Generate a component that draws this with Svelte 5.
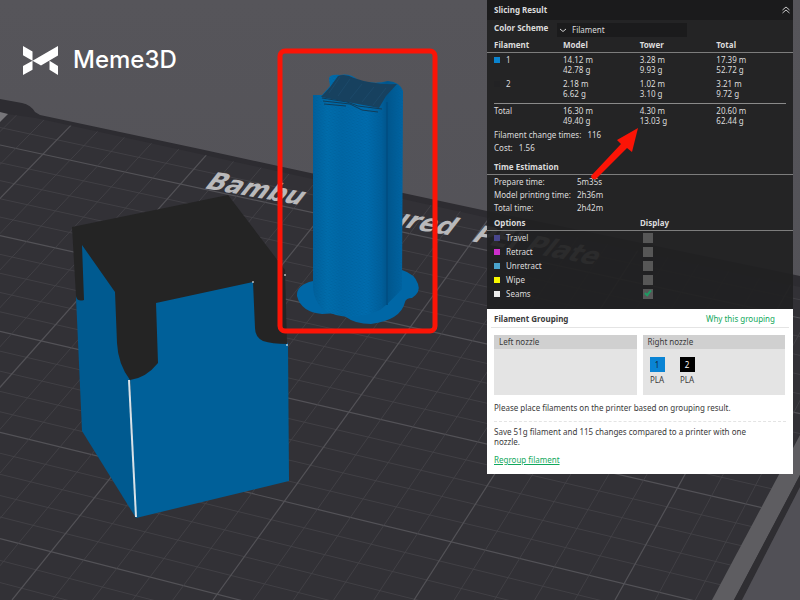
<script lang="ts">
  const filaments = [
    { id: 1, color: '#0a84cf', model: ['14.12 m', '42.78 g'], tower: ['3.28 m', '9.93 g'], total: ['17.39 m', '52.72 g'] },
    { id: 2, color: '#222224', model: ['2.18 m', '6.62 g'], tower: ['1.02 m', '3.10 g'], total: ['3.21 m', '9.72 g'] },
  ]
  const sums = [
    ['16.30 m', '49.40 g'],
    ['4.30 m', '13.03 g'],
    ['20.60 m', '62.44 g'],
  ]
  const times = [
    ['Prepare time:', '5m35s'],
    ['Model printing time:', '2h36m'],
    ['Total time:', '2h42m'],
  ]

  let scheme = $state('Filament')
  let options = $state([
    { name: 'Travel', color: '#48468c', shown: false },
    { name: 'Retract', color: '#cc2ecc', shown: false },
    { name: 'Unretract', color: '#4aa3cc', shown: false },
    { name: 'Wipe', color: '#f8f800', shown: false },
    { name: 'Seams', color: '#ececec', shown: true },
  ])

  // Build plate grid in perspective, every fifth line is a major one.
  const across = Array.from({ length: 30 }, (_, i) => {
    const m = (i - 1) / 5
    return { y1: 145 + 88 * m + 2.6 * m * m, y2: 318 + 92 * m + 3.6 * m * m, major: (i - 1) % 5 === 0 }
  })
  const along = Array.from({ length: 42 }, (_, i) => {
    const k = (i - 10) / 5
    // x at y=80 and y=600
    return { x1: 115 + 158 * k, x2: -390 + 201 * k, major: i % 5 === 0 }
  })
</script>

<main>
  <svg class="scene" viewBox="0 0 800 600" preserveAspectRatio="xMinYMin slice" aria-hidden="true">
    <defs>
      <clipPath id="plate">
        <path d="M0 113L36 118L200 154L403 199L487 217L793 285L800 287V436L712 600H0Z" />
      </clipPath>
      <linearGradient id="back" x1="0" y1="0" x2="0" y2="1">
        <stop offset="0" stop-color="#56555a" />
        <stop offset="1" stop-color="#504f55" />
      </linearGradient>
      <linearGradient id="tower" x1="0" y1="0" x2="1" y2="0">
        <stop offset="0" stop-color="#00609c" />
        <stop offset="0.16" stop-color="#006dac" />
        <stop offset="0.32" stop-color="#0067a6" />
        <stop offset="0.6" stop-color="#006cae" />
        <stop offset="0.76" stop-color="#005f9c" />
        <stop offset="0.82" stop-color="#00558c" />
        <stop offset="1" stop-color="#0064a3" />
      </linearGradient>
      <pattern id="layers" width="4" height="3" patternUnits="userSpaceOnUse" patternTransform="rotate(12)">
        <path d="M0 1H2M2 2.5H4" stroke="#00578d" stroke-width="0.6" opacity="0.55" />
      </pattern>
    </defs>

    <rect width="800" height="600" fill="url(#back)" />
    <path d="M0 99L22 103Q31 105 35 112L40 115L200 149L403 193L487 211L800 276V600H0Z" fill="#2d2c31" />
    <path d="M0 113L36 118L200 154L403 199L800 287V600H0Z" fill="#323136" />

    <g clip-path="url(#plate)">
      {#each across as line}
        <line class="grid" class:major={line.major} x1="0" y1={line.y1} x2="800" y2={line.y2} />
      {/each}
      {#each along as line}
        <line class="grid" class:major={line.major} x1={line.x1} y1="80" x2={line.x2} y2="600" />
      {/each}
    </g>
    <path d="M0 112L8 114L0 122Z" fill="#77767a" />
    <path d="M800 435L712 600H734L800 475Z" fill="#5e5d61" />
    <path d="M800 475L734 600H742L800 487Z" fill="#2f2e32" />
    <path d="M800 487L742 600H800Z" fill="#515056" />

    <g class="plate-name">
      <text transform="translate(203 188) rotate(10) skewX(-28)">Bambu</text>
      <text transform="translate(328 214) rotate(10) skewX(-28)">Textured</text>
      <text transform="translate(470 241) rotate(11) skewX(-28)">PEI Plate</text>
    </g>

    <!-- prime tower -->
    <path
      d="M313 281Q296 285 297 296Q301 312 322 314Q338 312 346 317Q355 324 371 324Q401 320 405 302Q406 298 412 298Q421 292 418 284Q415 274 402 270Z"
      fill="#0067a6"
    />
    <path
      d="M313 95L322 95L330 86L329 79Q329 74 340 75Q350 73 358 80Q374 85 388 81Q400 82 403 91L402 289Q388 304 380 310Q347 324 322 309Q314 300 313 288Z"
      fill="url(#tower)"
    />
    <path
      d="M313 95L322 95L330 86L329 79Q329 74 340 75Q350 73 358 80Q374 85 388 81Q400 82 403 91L402 289Q388 304 380 310Q347 324 322 309Q314 300 313 288Z"
      fill="url(#layers)"
    />
    <path d="M387 102V305" stroke="#004f84" stroke-width="2" />
    <path d="M338 76Q345 73 354 78Q373 85 397 84L386 96L379 108L321 97Q331 87 338 76Z" fill="#17415f" />
    <path d="M322 98L347 102L358 106L382 109M323 101L350 104L362 110L378 112M324 104L346 106" fill="none" stroke="#123c58" />
    <path d="M340 77L329 93M350 79L338 96M362 84L350 99M374 87L362 102M386 88L373 105" stroke="#23567a" opacity="0.4" />

    <!-- cube -->
    <path d="M76 297L82 431L136 518L130 380L116 290L82 244Z" fill="#005a90" />
    <path d="M130 376L155 300L253 281L288 344L289 481L136 518Z" fill="#006099" />
    <path
      d="M72 227L228 195L285 270L287 344Q272 344 263 341Q255 337 255 328L253 282L156 303L158 363Q146 378 130 380Q118 364 117 343L115 292L82 245L84 300Q77 302 76 296Z"
      fill="#242424"
    />
    <path d="M129 380L136 517" stroke="#d9e2e8" stroke-width="2" />
    <path d="M252 282h2M284 275h2M286 345h2" stroke="#fff" stroke-width="1" />
  </svg>

  <header class="brand">
    <svg width="35" height="29" viewBox="69 78 103 85" aria-hidden="true">
      <path
        d="M69 78L97 94V121L69 105ZM97 121L172 78V106L122 135ZM69 163V137L97 121V148ZM147 121L172 137V163L147 148Z"
        fill="#fff"
      />
    </svg>
    <span>Meme3D</span>
  </header>

  <aside class="panel">
    <section class="result">
      <div class="title">
        <h2>Slicing Result</h2>
        <button class="collapse" aria-label="Collapse">
          <svg width="8" height="8" viewBox="0 0 8 8"><path d="M0.5 4L4 1L7.5 4M0.5 7L4 4L7.5 7" fill="none" stroke="#c8c8c8" /></svg>
        </button>
      </div>

      <div class="scheme">
        <label for="scheme">Color Scheme</label>
        <div class="picker">
          <svg width="8" height="8" viewBox="0 0 8 8" aria-hidden="true"><path d="M1 3L4 5.5L7 3" fill="none" stroke="#d0d0d0" /></svg>
          <select id="scheme" bind:value={scheme}>
            <option>Filament</option>
            <option>Speed</option>
          </select>
        </div>
      </div>

      <table class="usage">
        <thead>
          <tr><th>Filament</th><th>Model</th><th>Tower</th><th>Total</th></tr>
        </thead>
        <tbody>
          {#each filaments as f (f.id)}
            <tr>
              <td><span class="swatch" style="background: {f.color}"></span>{f.id}</td>
              <td>{f.model[0]}<br />{f.model[1]}</td>
              <td>{f.tower[0]}<br />{f.tower[1]}</td>
              <td>{f.total[0]}<br />{f.total[1]}</td>
            </tr>
          {/each}
        </tbody>
        <tfoot>
          <tr>
            <td>Total</td>
            {#each sums as s}
              <td>{s[0]}<br />{s[1]}</td>
            {/each}
          </tr>
        </tfoot>
      </table>

      <p class="fact">Filament change times: <span>116</span></p>
      <p class="fact">Cost: <span>1.56</span></p>

      <h3>Time Estimation</h3>
      <dl>
        {#each times as [label, value]}
          <dt>{label}</dt>
          <dd>{value}</dd>
        {/each}
      </dl>

      <table class="options">
        <thead>
          <tr><th>Options</th><th>Display</th></tr>
        </thead>
        <tbody>
          {#each options as o (o.name)}
            <tr>
              <td>
                <label for="show-{o.name}"><span class="swatch" style="background: {o.color}"></span>{o.name}</label>
              </td>
              <td><input id="show-{o.name}" type="checkbox" bind:checked={o.shown} /></td>
            </tr>
          {/each}
        </tbody>
      </table>
    </section>

    <section class="grouping">
      <div class="group-head">
        <h2>Filament Grouping</h2>
        <a href="#why">Why this grouping</a>
      </div>
      <div class="nozzles">
        <div class="nozzle">
          <h4>Left nozzle</h4>
        </div>
        <div class="nozzle">
          <h4>Right nozzle</h4>
          <div class="chips">
            <div class="chip"><b class="blue">1</b>PLA</div>
            <div class="chip"><b>2</b>PLA</div>
          </div>
        </div>
      </div>
      <p class="hint">Please place filaments on the printer based on grouping result.</p>
      <p class="saving">Save 51g filament and 115 changes compared to a printer with one nozzle.</p>
      <a class="regroup" href="#regroup">Regroup filament</a>
    </section>
  </aside>

  <svg class="scene marks" viewBox="0 0 800 600" preserveAspectRatio="xMinYMin slice" aria-hidden="true">
    <rect x="280" y="51" width="155" height="280" rx="5" fill="none" stroke="#fb1406" stroke-width="5" />
    <path d="M591 176L621 144L617 140L638 128L632 152L627 148L596 179Q592 180 591 176Z" fill="#fb1406" />
  </svg>
</main>

<style>
  :global(body) {
    margin: 0;
  }
  main {
    position: relative;
    display: flex;
    justify-content: space-between;
    align-items: flex-start;
    min-height: 100vh;
    overflow: hidden;
    background: #545359;
    color: #dcdcdc;
    font: 8px/10px 'Noto Sans', 'Open Sans', sans-serif;
  }
  .scene {
    position: absolute;
    inset: 0;
    width: 100%;
    height: 100%;
  }
  .marks {
    pointer-events: none;
  }
  .grid {
    stroke: #454449;
    stroke-width: 0.8;
  }
  .grid.major {
    stroke: #535257;
    stroke-width: 1.2;
  }
  .plate-name {
    fill: #b9b9bb;
    font: bold 25px 'DejaVu Sans', sans-serif;
  }
  .brand {
    position: relative;
    display: flex;
    align-items: center;
    gap: 15px;
    padding: 45px 0 0 23px;
    color: #fff;
    font: 500 24px/30px Inter, sans-serif;
  }
  .panel {
    position: relative;
    width: 306px;
    margin-right: 7px;
  }
  h2,
  h3,
  h4,
  p,
  dl,
  dd {
    margin: 0;
    font-size: 8px;
  }
  .result {
    padding-bottom: 8px;
    background: rgba(32, 32, 33, 0.93);
  }
  .title {
    display: flex;
    justify-content: space-between;
    align-items: center;
    height: 20px;
    padding: 0 3px 0 7px;
    background: #1b1b1c;
  }
  .collapse {
    display: flex;
    padding: 0;
    border: 0;
    background: none;
  }
  .scheme {
    display: flex;
    align-items: flex-start;
    gap: 7px;
    height: 18px;
    padding: 0 7px;
  }
  .scheme label {
    width: 56px;
    padding-top: 3px;
    white-space: nowrap;
    font-weight: bold;
  }
  .picker {
    display: flex;
    align-items: center;
    gap: 5px;
    width: 130px;
    height: 14px;
    margin-top: 3px;
    padding-left: 2px;
    box-sizing: border-box;
    background: #1b1b1c;
  }
  select {
    flex: 1;
    padding: 0;
    border: 0;
    appearance: none;
    background: none;
    color: inherit;
    font: inherit;
  }
  table {
    width: 100%;
    border-spacing: 0;
    table-layout: fixed;
  }
  th,
  td {
    padding: 2px 0;
    text-align: left;
    vertical-align: top;
  }
  th {
    border-bottom: 1px solid #7d7d7d;
  }
  th:first-child,
  td:first-child {
    padding-left: 7px;
  }
  .usage th:first-child {
    width: 69px;
  }
  .swatch {
    display: inline-block;
    width: 6px;
    height: 6px;
    margin-right: 6px;
  }
  tfoot td {
    padding: 5px 0 4px;
    background: linear-gradient(#8a8a8a, #8a8a8a) no-repeat 0 2px / 100% 1px;
  }
  tfoot td:first-child {
    background-position: 7px 2px;
  }
  tfoot td:last-child {
    background-size: calc(100% - 7px) 1px;
  }
  .fact {
    padding: 0 7px 3px;
  }
  .fact span {
    margin-left: 4px;
  }
  h3 {
    margin-top: 6px;
    padding: 0 7px 2px;
    border-bottom: 1px solid #7d7d7d;
  }
  dl {
    display: grid;
    grid-template-columns: 83px 1fr;
    row-gap: 3px;
    padding: 2px 7px;
    white-space: nowrap;
  }
  .options {
    margin-top: 2px;
  }
  .options th {
    padding: 1px 0 2px;
  }
  .options th:first-child {
    width: 146px;
    padding-left: 7px;
  }
  input {
    display: block;
    appearance: none;
    width: 10px;
    height: 10px;
    margin: 0 3px;
    background: #575757;
  }
  input:checked::after {
    content: '';
    display: block;
    width: 2px;
    height: 5px;
    margin: 0 0 0 3px;
    border: solid #1f9a63;
    border-width: 0 2px 2px 0;
    transform: rotate(40deg);
  }
  .grouping {
    padding-bottom: 9px;
    background: #fff;
    color: #3a3a3a;
  }
  .group-head {
    display: flex;
    justify-content: space-between;
    margin: 0 4px;
    padding: 5px 14px 3px 3px;
    border-bottom: 1px solid #e4e4e4;
  }
  a {
    color: #12a85c;
    text-decoration: none;
  }
  .nozzles {
    display: grid;
    grid-template-columns: 1fr 1fr;
    gap: 6px;
    padding: 7px 8px 8px 7px;
  }
  .nozzle {
    height: 60px;
    background: #e4e4e4;
  }
  h4 {
    padding: 2px 5px;
    background: #d0d0d0;
    font-weight: normal;
  }
  .chips {
    display: flex;
    gap: 15px;
    padding: 8px 7px;
  }
  .chip {
    display: flex;
    flex-direction: column;
    align-items: center;
    gap: 3px;
    width: 15px;
  }
  .chip b {
    width: 15px;
    background: #000;
    color: #fff;
    text-align: center;
    font-weight: normal;
    line-height: 15px;
  }
  .chip .blue {
    background: #0a84d4;
    color: #10283a;
  }
  .hint {
    margin: 0 7px;
    padding-bottom: 8px;
    border-bottom: 1px dashed #e4e4e4;
  }
  .saving {
    padding: 5px 28px 8px 7px;
  }
  .regroup {
    margin-left: 7px;
    text-decoration: underline;
  }
</style>
